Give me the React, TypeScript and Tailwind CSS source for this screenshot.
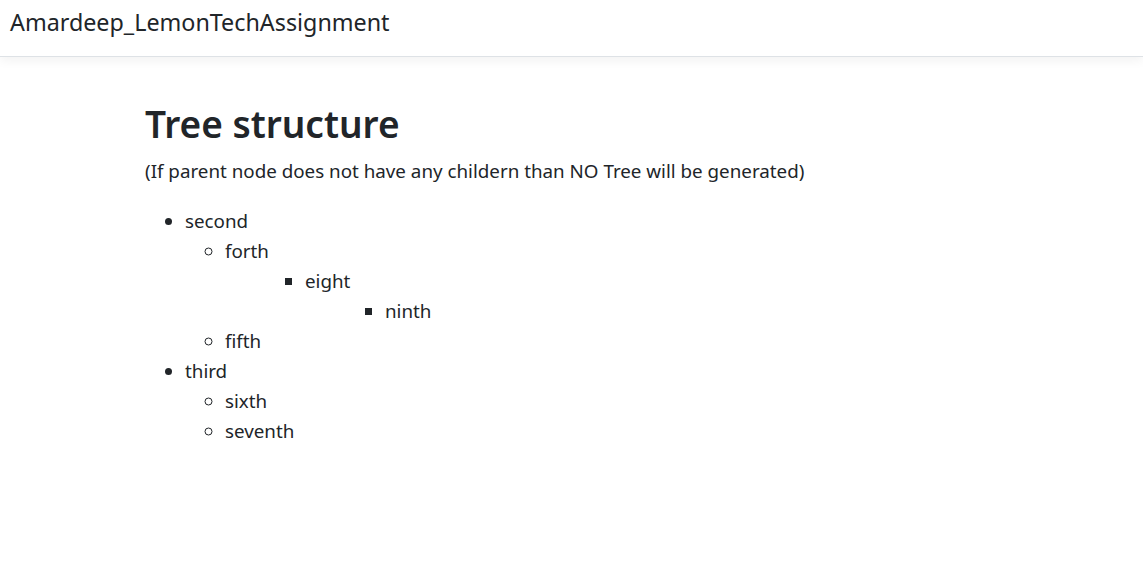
import React from "react";

const font = { fontFamily: '"Noto Sans", "Open Sans", sans-serif' };

export default function App() {
  return (
    <div className="min-h-[571px] bg-white text-[#212529]" style={font}>
      <nav className="h-[57px] flex items-start pt-[7px] px-[10px] border-b border-[#dee2e6] shadow-[0_4px_10px_rgba(0,0,0,0.05)]">
        <span className="text-[23.3px] leading-[30px] text-[#212529]">Amardeep_LemonTechAssignment</span>
      </nav>
      <main className="pl-[145px] pt-[43px]">
        <h1 className="text-[37px] leading-[48px] font-semibold mb-[8px]">Tree structure</h1>
        <p className="text-[18.8px] leading-[30px] mb-[20px]">
          (If parent node does not have any childern than NO Tree will be generated)
        </p>
        <ul className="list-disc pl-[40px] text-[18.8px] leading-[30px]">
          <li>
            second
            <ul className="list-[circle] pl-[40px]">
              <li>
                forth
                <ul className="list-[square] pl-[40px]">
                  <ul className="list-[square] pl-[40px]">
                    <li>
                      eight
                      <ul className="list-[square] pl-[40px]">
                        <ul className="list-[square] pl-[40px]">
                          <li>ninth</li>
                        </ul>
                      </ul>
                    </li>
                  </ul>
                </ul>
              </li>
              <li>fifth</li>
            </ul>
          </li>
          <li>
            third
            <ul className="list-[circle] pl-[40px]">
              <li>sixth</li>
              <li>seventh</li>
            </ul>
          </li>
        </ul>
      </main>
    </div>
  );
}
